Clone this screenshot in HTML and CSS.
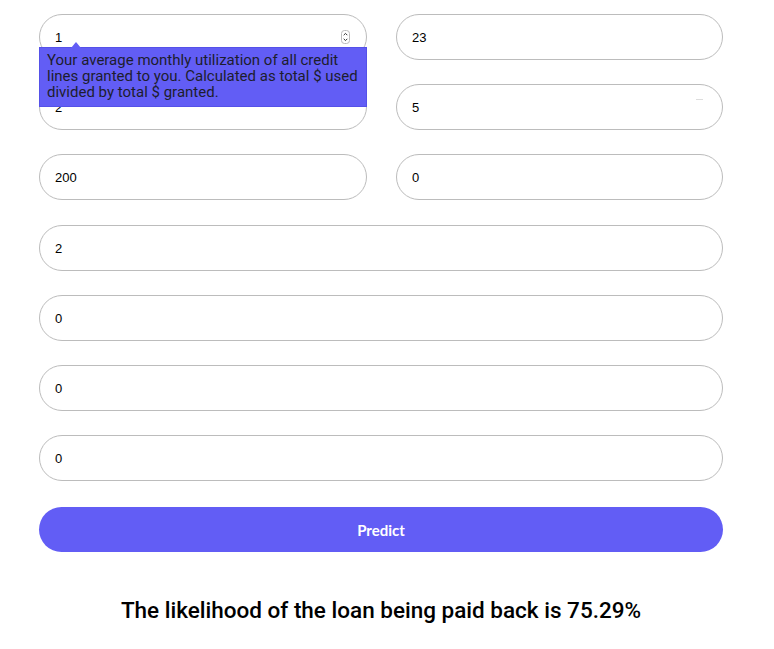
FILE: index.html
```html
<!DOCTYPE html>
<html>
<head>
<meta charset="utf-8">
<link rel="stylesheet" href="styles.css">
</head>
<body>
<main class="page">
  <form class="form">
    <div class="grid">
      <div class="field">
        <div class="input">1
          <span class="spinner">
            <svg width="9" height="14" viewBox="0 0 9 14"><rect x="0.5" y="0.5" width="8" height="13" rx="3" fill="#fff" stroke="#bbb"/><path d="M2.7 5.2 L4.5 3.4 L6.3 5.2" fill="none" stroke="#333" stroke-width="1"/><path d="M2.7 8.8 L4.5 10.6 L6.3 8.8" fill="none" stroke="#333" stroke-width="1"/></svg>
          </span>
        </div>
        <div class="tooltip">Your average monthly utilization of all credit lines granted to you. Calculated as total $ used divided by total $ granted.</div>
      </div>
      <div class="field"><div class="input">23</div></div>
      <div class="field"><div class="input">2</div></div>
      <div class="field"><div class="input">5<span class="mark"></span></div></div>
      <div class="field"><div class="input">200</div></div>
      <div class="field"><div class="input">0</div></div>
      <div class="field wide first-wide"><div class="input">2</div></div>
      <div class="field wide"><div class="input">0</div></div>
      <div class="field wide"><div class="input">0</div></div>
      <div class="field wide"><div class="input">0</div></div>
    </div>
    <div class="button">Predict</div>
  </form>
  <p class="result">The likelihood of the loan being paid back is 75.29%</p>
</main>
</body>
</html>
```
FILE: styles.css
```css
html, body {
  margin: 0;
  padding: 0;
  background: #fff;
}
.page {
  width: 684px;
  margin-left: 39px;
  padding-top: 14px;
}
.grid {
  display: grid;
  grid-template-columns: 328px 327px;
  column-gap: 29px;
  row-gap: 24px;
}
.field {
  position: relative;
}
.field.wide {
  grid-column: 1 / span 2;
}
.first-wide {
  margin-top: 1px;
}
.input {
  position: relative;
  box-sizing: border-box;
  height: 46px;
  border: 1px solid #bcbcbc;
  border-radius: 23px;
  padding-left: 15px;
  display: flex;
  align-items: center;
  font-family: "Liberation Sans", Arial, sans-serif;
  font-size: 13px;
  color: #000;
}
.spinner {
  position: absolute;
  left: 301px;
  top: 15px;
  width: 9px;
  height: 14px;
  display: flex;
}
.mark {
  position: absolute;
  right: 19px;
  top: 14px;
  width: 7px;
  height: 1px;
  background: #ddd;
}
.tooltip {
  position: absolute;
  left: 0;
  top: 33px;
  width: 328px;
  box-sizing: border-box;
  height: 60px;
  background: #625df5;
  border: 1px solid #5551e8;
  padding: 4px 6px 0 7px;
  font-family: Roboto, "Noto Sans", sans-serif;
  font-size: 15px;
  line-height: 16px;
  color: #1d1d2e;
  z-index: 2;
}
.tooltip::before {
  content: "";
  position: absolute;
  left: 31px;
  top: -6px;
  border-left: 5px solid transparent;
  border-right: 5px solid transparent;
  border-bottom: 6px solid #625df5;
}
.button {
  margin-top: 26px;
  height: 45px;
  border-radius: 23px;
  background: #625df5;
  display: flex;
  align-items: center;
  justify-content: center;
  color: #fff;
  font-family: Lato, "Open Sans", sans-serif;
  font-weight: 700;
  font-size: 15px;
}
.result {
  margin: 43px 0 0 0;
  text-align: center;
  font-family: Roboto, "Noto Sans", sans-serif;
  font-weight: 500;
  font-size: 22.5px;
  line-height: 30px;
  color: #000;
}
```
